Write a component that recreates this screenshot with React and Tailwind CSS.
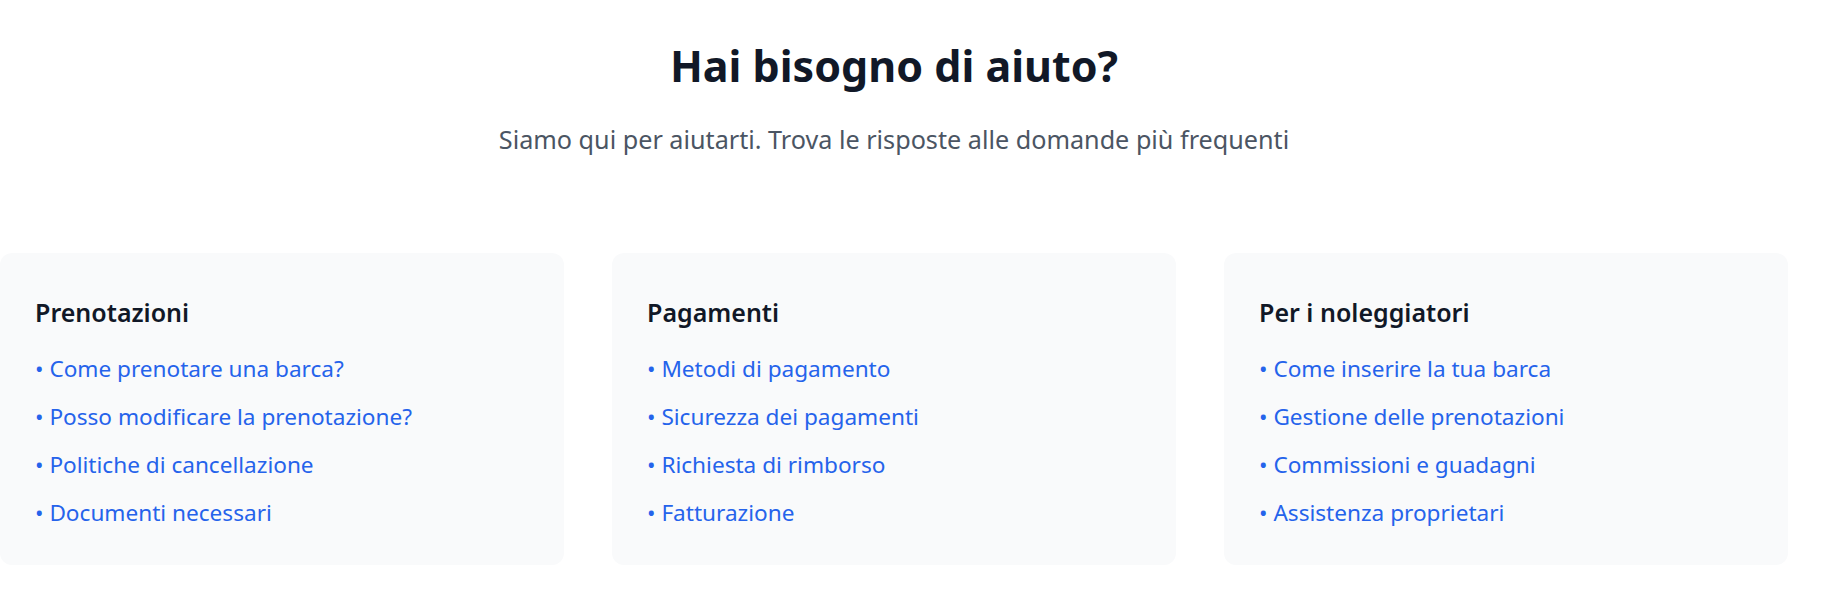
import React from 'react'

const sections = [
  {
    title: "Prenotazioni",
    links: [
      "Come prenotare una barca?",
      "Posso modificare la prenotazione?",
      "Politiche di cancellazione",
      "Documenti necessari",
    ],
  },
  {
    title: "Pagamenti",
    links: [
      "Metodi di pagamento",
      "Sicurezza dei pagamenti",
      "Richiesta di rimborso",
      "Fatturazione",
    ],
  },
  {
    title: "Per i noleggiatori",
    links: [
      "Come inserire la tua barca",
      "Gestione delle prenotazioni",
      "Commissioni e guadagni",
      "Assistenza proprietari",
    ],
  },
]

function HelpCard({ section }) {
  return (
    <div className="bg-[#f9fafb] rounded-xl pt-[44px] pb-[35px] px-[35px]">
      <h3 className="text-[25px] leading-[30px] font-semibold text-[#111827]">
        {section.title}
      </h3>
      <ul className="mt-[25px] flex flex-col gap-[14px]">
        {section.links.map((link) => (
          <li key={link} className="text-[22.6px] leading-[34px]">
            <a href="#" className="text-[#2563eb] hover:underline">
              • {link}
            </a>
          </li>
        ))}
      </ul>
    </div>
  )
}

export default function App() {
  return (
    <div className="min-h-screen bg-white font-['Noto_Sans',sans-serif]">
      <div className="w-[1788px] pt-[42px]">
        <div className="text-center">
          <h2 className="text-[43px] leading-[48px] font-bold text-[#111827]">
            Hai bisogno di aiuto?
          </h2>
          <p className="mt-[33px] text-[25.2px] leading-[32px] text-[#4b5563]">
            Siamo qui per aiutarti. Trova le risposte alle domande più frequenti
          </p>
        </div>

        <div className="mt-[98px] grid grid-cols-3 gap-12">
          {sections.map((s) => (
            <HelpCard key={s.title} section={s} />
          ))}
        </div>
      </div>
    </div>
  )
}
